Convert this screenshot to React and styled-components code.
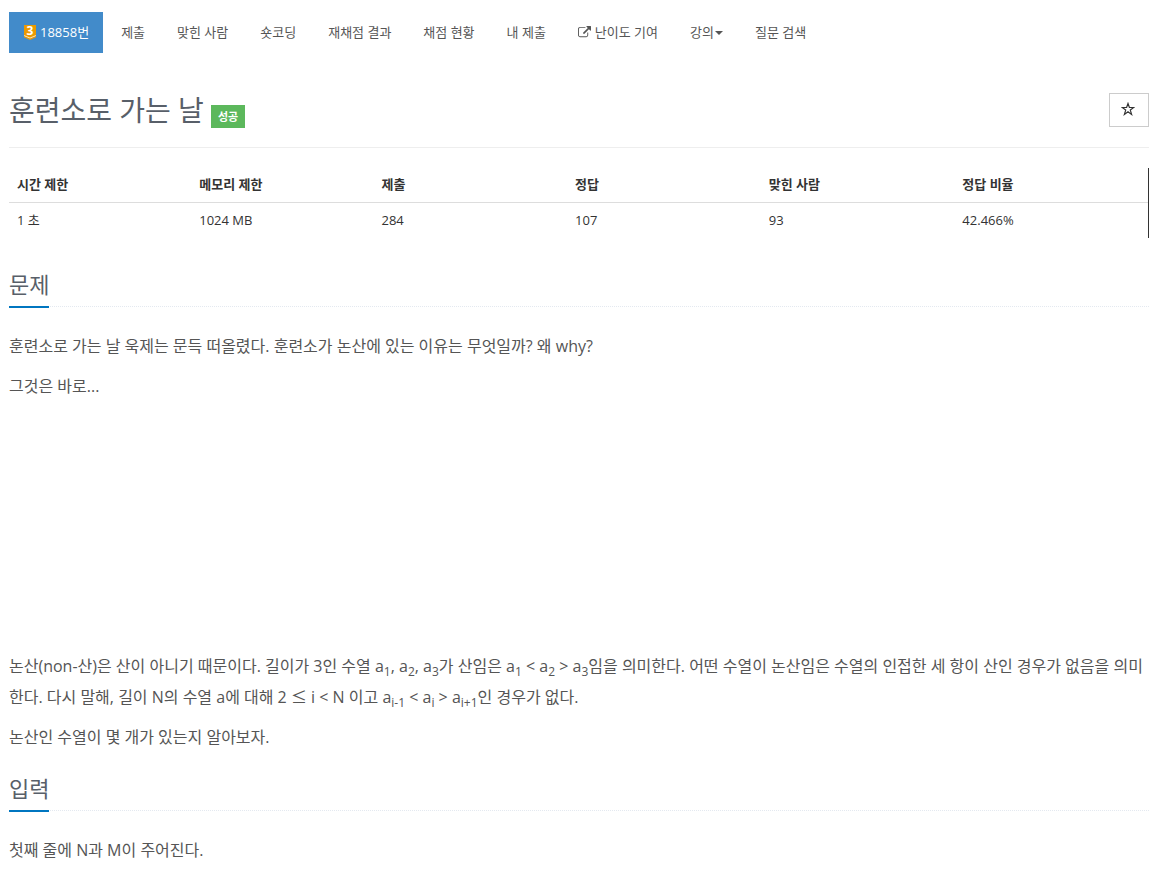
import React from 'react'
import styled, { createGlobalStyle } from 'styled-components'

const tabs = ['제출', '맞힌 사람', '숏코딩', '재채점 결과', '채점 현황', '내 제출']

const limits = [
  { label: '시간 제한', value: '1 초', width: '16%' },
  { label: '메모리 제한', value: '1024 MB', width: '16%' },
  { label: '제출', value: '284', width: '17%' },
  { label: '정답', value: '107', width: '17%' },
  { label: '맞힌 사람', value: '93', width: '17%' },
  { label: '정답 비율', value: '42.466%', width: '17%' }
]

const TierBadge = () => (
  <svg width='13' height='16' viewBox='0 0 13 16' aria-hidden='true'>
    <path d='M1 1h12v11l-6 3-6-3z' fill='#ec9a00' />
    <path d='M1 11l6 2.500 6-2.500v1.200l-6 2.500-6-2.500z' fill='#ffe0a8' />
    <path d='M1 12.200l6 2.500 6-2.500v1l-6 2.800-6-2.800z' fill='#ec9a00' />
    <text x='7' y='11' textAnchor='middle' fontSize='12' fontWeight='700' fill='#fff'>3</text>
  </svg>
)

const ExternalIcon = () => (
  <svg width='13' height='12' viewBox='0 0 1792 1650' fill='currentColor' aria-hidden='true'>
    <path d='M1408 928v320q0 119-84.500 203.500t-203.500 84.500h-832q-119 0-203.500-84.500t-84.500-203.500v-832q0-119 84.500-203.500t203.500-84.500h704q14 0 23 9t9 23v64q0 14-9 23t-23 9h-704q-66 0-113 47t-47 113v832q0 66 47 113t113 47h832q66 0 113-47t47-113v-320q0-14 9-23t23-9h64q14 0 23 9t9 23zm384-864v512q0 26-19 45t-45 19-45-19l-176-176-652 652q-10 10-23 10t-23-10l-114-114q-10-10-10-23t10-23l652-652-176-176q-19-19-19-45t19-45 45-19h512q26 0 45 19t19 45z' />
  </svg>
)

const StarIcon = () => (
  <svg width='14' height='14' viewBox='0 0 14 14' fill='none' stroke='currentColor' strokeWidth='1.2' aria-hidden='true'>
    <path d='M7 1.500l1.400 4h4.400l-3.500 2.600 1.300 4.300-3.600-2.600-3.600 2.600 1.300-4.300-3.500-2.600h4.400z' />
  </svg>
)

const Section = ({ title, children }) => (
  <section>
    <Headline>
      <h2>{title}</h2>
    </Headline>
    <Body>{children}</Body>
  </section>
)

const App = () => (
  <Page lang='ko'>
    <GlobalStyle />
    <Menu>
      <Tab href='#problem' $active>
        <TierBadge />
        18858번
      </Tab>
      {tabs.map(tab => (
        <Tab href='#tab' key={tab}>{tab}</Tab>
      ))}
      <Tab href='#difficulty'>
        <ExternalIcon />
        난이도 기여
      </Tab>
      <Tab href='#lecture' $tight>
        강의
        <Caret />
      </Tab>
      <Tab href='#board'>질문 검색</Tab>
    </Menu>

    <Header>
      <h1>훈련소로 가는 날</h1>
      <Label>성공</Label>
      <StarButton type='button' aria-label='즐겨찾기'>
        <StarIcon />
      </StarButton>
    </Header>

    <Info>
      <thead>
        <tr>
          {limits.map(({ label, width }) => (
            <Th key={label} $width={width}>{label}</Th>
          ))}
        </tr>
      </thead>
      <tbody>
        <tr>
          {limits.map(({ label, value }) => (
            <td key={label}>{value}</td>
          ))}
        </tr>
      </tbody>
    </Info>

    <Section title='문제'>
      <p>훈련소로 가는 날 욱제는 문득 떠올렸다. 훈련소가 논산에 있는 이유는 무엇일까? 왜 why?</p>
      <p>그것은 바로...</p>
      <Gap />
      <p>
        논산(non-산)은 산이 아니기 때문이다. 길이가 3인 수열 a<sub>1</sub>, a<sub>2</sub>, a<sub>3</sub>가 산임은
        {' '}a<sub>1</sub> &lt; a<sub>2</sub> &gt; a<sub>3</sub>임을 의미한다. 어떤 수열이 논산임은 수열의 인접한 세
        항이 산인 경우가 없음을 의미한다. 다시 말해, 길이 N의 수열 a에 대해 2 <Sign>≤</Sign> i &lt; N 이고
        {' '}a<sub>i-1</sub> &lt; a<sub>i</sub> &gt; a<sub>i+1</sub>인 경우가 없다.
      </p>
      <p>논산인 수열이 몇 개가 있는지 알아보자.</p>
    </Section>

    <Section title='입력'>
      <p>첫째 줄에 N과 M이 주어진다.</p>
    </Section>
  </Page>
)

const GlobalStyle = createGlobalStyle`
  * {
    box-sizing: border-box;
  }

  body {
    margin: 0;
    background: #fff;
    color: #333;
    font-family: 'Open Sans', 'Noto Sans CJK KR', sans-serif;
    font-size: 13px;
    line-height: 20px;
  }
`

const Page = styled.main`
  padding: 12px 19px 0 9px;
`

const Menu = styled.nav`
  display: flex;
  gap: 4px;
`

const Tab = styled.a`
  display: flex;
  align-items: center;
  gap: ${({ $tight }) => ($tight ? '1px' : '4px')};
  height: 41px;
  padding: 0 14px 2px;
  color: ${({ $active }) => ($active ? '#fff' : '#555')};
  background: ${({ $active }) => ($active ? '#428bca' : 'transparent')};
  font-size: 13px;
  text-decoration: none;
  white-space: nowrap;
`

const Caret = styled.span`
  margin-top: 2px;
  border-top: 4px solid #555;
  border-right: 4px solid transparent;
  border-left: 4px solid transparent;
`

const Header = styled.header`
  display: flex;
  align-items: center;
  gap: 7px;
  height: 76px;
  margin: 19px 0 20px;
  border-bottom: 1px solid #eee;

  h1 {
    margin: 0;
    color: #585f69;
    font-size: 28px;
    font-weight: 400;
    line-height: 36px;
  }
`

const Label = styled.span`
  margin-top: 14px;
  padding: 2px 7px;
  background: #5cb85c;
  color: #fff;
  font-size: 11px;
  font-weight: 700;
  line-height: 19px;
`

const StarButton = styled.button`
  display: flex;
  align-items: center;
  justify-content: center;
  width: 40px;
  height: 34px;
  margin-left: auto;
  padding: 0 2px 2px 0;
  border: 1px solid #ccc;
  background: #fff;
  color: #333;
  cursor: pointer;
`

const Info = styled.table`
  width: 100%;
  margin-bottom: 30px;
  border-right: 1px solid #333;
  border-collapse: separate;
  border-spacing: 0;
  table-layout: fixed;

  td {
    height: 35px;
    padding: 0 8px 2px;
  }
`

const Th = styled.th`
  width: ${({ $width }) => $width};
  height: 35px;
  padding: 0 8px 2px;
  border-bottom: 1px solid #ddd;
  font-size: 13px;
  font-weight: 700;
  text-align: left;
`

const Headline = styled.div`
  margin: 20px 0 24px;
  border-bottom: 1px dotted #e4e9f0;

  h2 {
    display: inline-block;
    height: 40px;
    margin: 0 0 -2px;
    border-bottom: 2px solid #0076c0;
    color: #585f69;
    font-size: 22px;
    font-weight: 400;
    line-height: 32px;
    vertical-align: top;
  }
`

const Body = styled.div`
  color: #555;
  font-size: 16px;
  line-height: 30px;

  p {
    margin: 0 0 10px;
  }

  sub {
    font-size: 12px;
    line-height: 0;
  }
`

const Sign = styled.span`
  font-family: 'Noto Sans CJK KR', sans-serif;
`

const Gap = styled.div`
  height: 240px;
`

export default App
